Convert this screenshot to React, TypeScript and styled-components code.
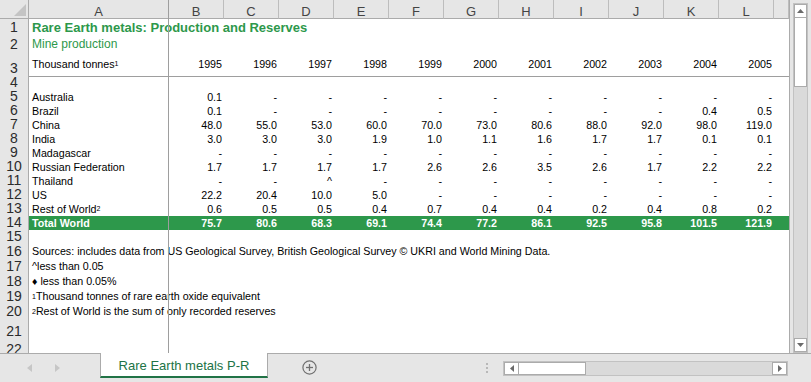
import styled, { createGlobalStyle } from "styled-components";

const GlobalStyle = createGlobalStyle`
  html, body {
    margin: 0;
    padding: 0;
    background: #fff;
  }
  body {
    font-family: "Liberation Sans", Arial, sans-serif;
  }
  * {
    box-sizing: border-box;
  }
`;

const COLS = ["A", "B", "C", "D", "E", "F", "G", "H", "I", "J", "K", "L", ""];
const YEARS = ["1995", "1996", "1997", "1998", "1999", "2000", "2001", "2002", "2003", "2004", "2005"];

interface DataRow {
  n: number;
  label: string;
  sup?: string;
  values: string[];
}

const DASHES = (k: number) => Array.from({ length: k }, () => "-");

const DATA: DataRow[] = [
  { n: 5, label: "Australia", values: ["0.1", ...DASHES(10)] },
  { n: 6, label: "Brazil", values: ["0.1", ...DASHES(8), "0.4", "0.5"] },
  { n: 7, label: "China", values: ["48.0", "55.0", "53.0", "60.0", "70.0", "73.0", "80.6", "88.0", "92.0", "98.0", "119.0"] },
  { n: 8, label: "India", values: ["3.0", "3.0", "3.0", "1.9", "1.0", "1.1", "1.6", "1.7", "1.7", "0.1", "0.1"] },
  { n: 9, label: "Madagascar", values: DASHES(11) },
  { n: 10, label: "Russian Federation", values: ["1.7", "1.7", "1.7", "1.7", "2.6", "2.6", "3.5", "2.6", "1.7", "2.2", "2.2"] },
  { n: 11, label: "Thailand", values: ["-", "-", "^", ...DASHES(8)] },
  { n: 12, label: "US", values: ["22.2", "20.4", "10.0", "5.0", ...DASHES(7)] },
  { n: 13, label: "Rest of World", sup: "2", values: ["0.6", "0.5", "0.5", "0.4", "0.7", "0.4", "0.4", "0.2", "0.4", "0.8", "0.2"] },
];

const TOTAL = ["75.7", "80.6", "68.3", "69.1", "74.4", "77.2", "86.1", "92.5", "95.8", "101.5", "121.9"];

const NOTES: { n: number; h: number; sup?: string; text: string }[] = [
  { n: 16, h: 15, text: "Sources: includes data from US Geological Survey, British Geological Survey \u00a9 UKRI and World Mining Data." },
  { n: 17, h: 15, text: "^less than 0.05" },
  { n: 18, h: 15, text: "\u2666 less than 0.05%" },
  { n: 19, h: 15, sup: "1", text: "Thousand tonnes of rare earth oxide equivalent" },
  { n: 20, h: 15, sup: "2", text: "Rest of World is the sum of only recorded reserves" },
  { n: 21, h: 20, text: "" },
  { n: 22, h: 18, text: "" },
];

const GREEN = "#2d984b";

const App = () => {
  return (
    <>
      <GlobalStyle />
      <Window>
        <Main>
          <Sheet>
            <Row $h={19}>
              <Corner>
                <svg width="28" height="18" viewBox="0 0 28 18">
                  <polygon points="26,4 26,16 14,16" fill="#c4c4c4" />
                </svg>
              </Corner>
              {COLS.map((c, i) => (
                <ColHead key={i}>{c}</ColHead>
              ))}
            </Row>

            <Row $h={16}>
              <RowNum>1</RowNum>
              <TextCell $title>Rare Earth metals: Production and Reserves</TextCell>
            </Row>
            <Row $h={17}>
              <RowNum>2</RowNum>
              <TextCell $sub>Mine production</TextCell>
            </Row>
            <Row $h={24}>
              <RowNum>3</RowNum>
              <Cell>
                Thousand tonnes<Sup>1</Sup>
              </Cell>
              {YEARS.map((y) => (
                <Cell key={y} $num>
                  {y}
                </Cell>
              ))}
              <Cell />
            </Row>
            <Row $h={14}>
              <RowNum>4</RowNum>
            </Row>

            {DATA.map((r) => (
              <Row key={r.n} $h={14}>
                <RowNum>{r.n}</RowNum>
                <Cell>
                  {r.label}
                  {r.sup && <Sup>{r.sup}</Sup>}
                </Cell>
                {r.values.map((v, i) => (
                  <Cell key={i} $num>
                    {v}
                  </Cell>
                ))}
                <Cell />
              </Row>
            ))}

            <Row $h={14}>
              <RowNum>14</RowNum>
              <Cell $total>Total World</Cell>
              {TOTAL.map((v, i) => (
                <Cell key={i} $num $total>
                  {v}
                </Cell>
              ))}
              <Cell $total />
            </Row>
            <Row $h={14}>
              <RowNum>15</RowNum>
            </Row>

            {NOTES.map((r) => (
              <Row key={r.n} $h={r.h}>
                <RowNum>{r.n}</RowNum>
                <TextCell>
                  {r.sup && <Sup>{r.sup}</Sup>}
                  {r.text}
                </TextCell>
              </Row>
            ))}

            <FreezeV />
            <FreezeH />
          </Sheet>

          <VScrollPane>
            <VScroll>
              <ScrollBtn $v>
                <svg width="7" height="4" viewBox="0 0 7 4">
                  <polygon points="0,4 7,4 3.5,0" fill="#6a6a6a" />
                </svg>
              </ScrollBtn>
              <VThumb />
              <Track />
              <ScrollBtn $v>
                <svg width="7" height="4" viewBox="0 0 7 4">
                  <polygon points="0,0 7,0 3.5,4" fill="#6a6a6a" />
                </svg>
              </ScrollBtn>
            </VScroll>
          </VScrollPane>
        </Main>

        <TabBar>
          <TabNav>
            <svg width="5" height="8" viewBox="0 0 5 8">
              <polygon points="5,0 5,8 0,4" fill="#c6c6c6" />
            </svg>
            <svg width="5" height="8" viewBox="0 0 5 8">
              <polygon points="0,0 0,8 5,4" fill="#c6c6c6" />
            </svg>
          </TabNav>
          <SheetTab>Rare Earth metals P-R</SheetTab>
          <AddSheet>
            <svg width="15" height="15" viewBox="0 0 15 15">
              <circle cx="7.5" cy="7.5" r="6.6" fill="none" stroke="#707070" strokeWidth="1.2" />
              <line x1="7.5" y1="4" x2="7.5" y2="11" stroke="#707070" strokeWidth="1.3" />
              <line x1="4" y1="7.5" x2="11" y2="7.5" stroke="#707070" strokeWidth="1.3" />
            </svg>
          </AddSheet>
          <Spacer />
          <Grip>
            <span />
            <span />
            <span />
          </Grip>
          <HScroll>
            <ScrollBtn>
              <svg width="4" height="7" viewBox="0 0 4 7">
                <polygon points="4,0 4,7 0,3.5" fill="#6a6a6a" />
              </svg>
            </ScrollBtn>
            <HThumb />
            <Track />
            <ScrollBtn>
              <svg width="4" height="7" viewBox="0 0 4 7">
                <polygon points="0,0 0,7 4,3.5" fill="#6a6a6a" />
              </svg>
            </ScrollBtn>
          </HScroll>
        </TabBar>
      </Window>
    </>
  );
};

export default App;

const Window = styled.div`
  width: 811px;
  height: 382px;
  display: flex;
  flex-direction: column;
  overflow: hidden;
  background: #fff;
`;

const Main = styled.div`
  display: flex;
  height: 353px;
`;

const Sheet = styled.div`
  position: relative;
  width: 789px;
  height: 353px;
  overflow: hidden;
  background: #fff;
`;

const Row = styled.div<{ $h: number }>`
  display: grid;
  grid-template-columns: 29px 140px repeat(11, 55px) 15px;
  height: ${(p) => p.$h}px;
`;

const Corner = styled.div`
  background: #e6e6e6;
  border-right: 1px solid #ababab;
  border-bottom: 1px solid #ababab;
  display: flex;
  svg {
    display: block;
  }
`;

const ColHead = styled.div`
  background: #e6e6e6;
  border-right: 1px solid #bdbdbd;
  border-bottom: 1px solid #ababab;
  display: flex;
  align-items: flex-end;
  justify-content: center;
  font-size: 13px;
  line-height: 13px;
  color: #444;
  overflow: hidden;
`;

const RowNum = styled.div`
  background: #e6e6e6;
  border-right: 1px solid #ababab;
  display: flex;
  align-items: flex-end;
  justify-content: center;
  font-size: 14px;
  line-height: 12px;
  color: #2b2b2b;
  padding-bottom: 2px;
  overflow: hidden;
`;

const Cell = styled.div<{ $num?: boolean; $total?: boolean }>`
  display: flex;
  align-items: center;
  justify-content: ${(p) => (p.$num ? "flex-end" : "flex-start")};
  padding: ${(p) => (p.$num ? "0 2px 0 0" : "0 0 0 3px")};
  white-space: nowrap;
  font-size: 10.7px;
  line-height: 1;
  color: ${(p) => (p.$total ? "#fff" : "#000")};
  font-weight: ${(p) => (p.$total ? "bold" : "normal")};
  background: ${(p) => (p.$total ? GREEN : "transparent")};
`;

const TextCell = styled.div<{ $title?: boolean; $sub?: boolean }>`
  grid-column: 2 / -1;
  display: flex;
  align-items: center;
  padding-left: 3px;
  white-space: nowrap;
  font-size: ${(p) => (p.$title ? "13px" : p.$sub ? "12px" : "10.7px")};
  font-weight: ${(p) => (p.$title ? "bold" : "normal")};
  line-height: 1;
  color: ${(p) => (p.$title || p.$sub ? GREEN : "#000")};
`;

const Sup = styled.sup`
  font-size: 7px;
  line-height: 0;
  vertical-align: 5px;
`;

const FreezeV = styled.div`
  position: absolute;
  left: 168px;
  top: 0;
  bottom: 0;
  width: 1px;
  background: #9e9e9e;
`;

const FreezeH = styled.div`
  position: absolute;
  left: 29px;
  right: 0;
  top: 76px;
  height: 1px;
  background: #9e9e9e;
`;

const VScrollPane = styled.div`
  width: 22px;
  background: #e6e6e6;
  border-left: 1px solid #ababab;
  padding: 3px 0 0 3px;
`;

const VScroll = styled.div`
  width: 15px;
  height: 350px;
  display: flex;
  flex-direction: column;
  background: #dadada;
  border: 1px solid #c2c2c2;
`;

const ScrollBtn = styled.div<{ $v?: boolean }>`
  flex: none;
  width: ${(p) => (p.$v ? "100%" : "15px")};
  height: ${(p) => (p.$v ? "14px" : "100%")};
  background: #fff;
  border: 1px solid #ababab;
  display: flex;
  align-items: center;
  justify-content: center;
  svg {
    display: block;
  }
`;

const VThumb = styled.div`
  flex: none;
  height: 69px;
  background: #fff;
  border: 1px solid #ababab;
  border-top: none;
`;

const HThumb = styled.div`
  flex: none;
  width: 67px;
  background: #fff;
  border: 1px solid #ababab;
  border-left: none;
`;

const Track = styled.div`
  flex: 1;
  background: #dadada;
`;

const TabBar = styled.div`
  height: 29px;
  background: #e6e6e6;
  border-top: 1px solid #ababab;
  display: flex;
  align-items: flex-start;
`;

const TabNav = styled.div`
  width: 100px;
  height: 27px;
  display: flex;
  align-items: center;
  padding-left: 27px;
  gap: 23px;
  svg {
    display: block;
  }
`;

const SheetTab = styled.div`
  width: 168px;
  height: 25px;
  margin-top: -1px;
  background: #fff;
  border-left: 1px solid #ababab;
  border-right: 1px solid #ababab;
  border-bottom: 2px solid #217346;
  display: flex;
  align-items: center;
  justify-content: center;
  padding-top: 1px;
  font-size: 13px;
  color: #217346;
  white-space: nowrap;
`;

const AddSheet = styled.div`
  margin-left: 34px;
  height: 27px;
  display: flex;
  align-items: center;
  svg {
    display: block;
  }
`;

const Spacer = styled.div`
  flex: 1;
`;

const Grip = styled.div`
  height: 27px;
  display: flex;
  flex-direction: column;
  justify-content: center;
  gap: 2px;
  margin-right: 15px;
  span {
    width: 2px;
    height: 2px;
    background: #b8b8b8;
  }
`;

const HScroll = styled.div`
  width: 285px;
  height: 15px;
  margin-top: 7px;
  margin-right: 23px;
  display: flex;
  background: #dadada;
  border: 1px solid #c2c2c2;
`;
